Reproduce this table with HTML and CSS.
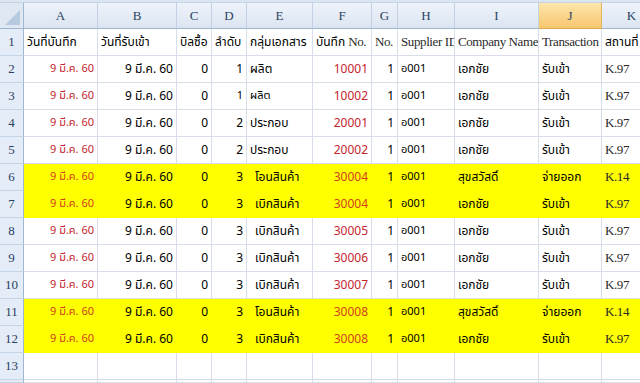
FILE: index.html
```html
<!DOCTYPE html>
<html lang="th">
<head>
<meta charset="utf-8">
<title>Sheet</title>
<link rel="stylesheet" href="styles.css">
</head>
<body>
<div class="sheet">
  <div class="strip"></div>
  <div class="row colhead">
    <div class="corner"><span class="tri"></span></div>
    <div class="ch">A</div><div class="ch">B</div><div class="ch">C</div><div class="ch">D</div><div class="ch">E</div><div class="ch">F</div><div class="ch">G</div><div class="ch">H</div><div class="ch">I</div><div class="ch sel">J</div><div class="ch">K</div>
  </div>
  <div class="row">
    <div class="rh">1</div>
    <div class="c">วันที่บันทึก</div><div class="c">วันที่รับเข้า</div><div class="c">บิลซื้อ</div><div class="c">ลำดับ</div><div class="c">กลุ่มเอกสาร</div><div class="c">บันทึก <span class="lat">No.</span></div><div class="c lat">No.</div><div class="c lat">Supplier ID</div><div class="c lat">Company Name</div><div class="c lat">Transaction</div><div class="c">สถานที่</div>
  </div>
  <div class="row">
    <div class="rh">2</div>
    <div class="c r red sm">9 มี.ค. 60</div><div class="c r">9 มี.ค. 60</div><div class="c r">0</div><div class="c r">1</div><div class="c">ผลิต</div><div class="c r red">10001</div><div class="c r">1</div><div class="c sm">อ001</div><div class="c">เอกชัย</div><div class="c">รับเข้า</div><div class="c lat">K.97</div>
  </div>
  <div class="row">
    <div class="rh">3</div>
    <div class="c r red sm">9 มี.ค. 60</div><div class="c r">9 มี.ค. 60</div><div class="c r">0</div><div class="c r sm">1</div><div class="c sm">ผลิต</div><div class="c r red">10002</div><div class="c r">1</div><div class="c sm">อ001</div><div class="c">เอกชัย</div><div class="c">รับเข้า</div><div class="c lat">K.97</div>
  </div>
  <div class="row">
    <div class="rh">4</div>
    <div class="c r red sm">9 มี.ค. 60</div><div class="c r">9 มี.ค. 60</div><div class="c r">0</div><div class="c r">2</div><div class="c">ประกอบ</div><div class="c r red">20001</div><div class="c r">1</div><div class="c sm">อ001</div><div class="c">เอกชัย</div><div class="c">รับเข้า</div><div class="c lat">K.97</div>
  </div>
  <div class="row">
    <div class="rh">5</div>
    <div class="c r red sm">9 มี.ค. 60</div><div class="c r">9 มี.ค. 60</div><div class="c r">0</div><div class="c r">2</div><div class="c">ประกอบ</div><div class="c r red">20002</div><div class="c r">1</div><div class="c sm">อ001</div><div class="c">เอกชัย</div><div class="c">รับเข้า</div><div class="c lat">K.97</div>
  </div>
  <div class="row hl">
    <div class="rh">6</div>
    <div class="c r red sm">9 มี.ค. 60</div><div class="c r">9 มี.ค. 60</div><div class="c r">0</div><div class="c r">3</div><div class="c ind">โอนสินค้า</div><div class="c r red">30004</div><div class="c r">1</div><div class="c sm">อ001</div><div class="c">สุขสวัสดิ์</div><div class="c">จ่ายออก</div><div class="c lat">K.14</div>
  </div>
  <div class="row hl">
    <div class="rh">7</div>
    <div class="c r red sm">9 มี.ค. 60</div><div class="c r">9 มี.ค. 60</div><div class="c r">0</div><div class="c r">3</div><div class="c ind">เบิกสินค้า</div><div class="c r red">30004</div><div class="c r">1</div><div class="c sm">อ001</div><div class="c">เอกชัย</div><div class="c">รับเข้า</div><div class="c lat">K.97</div>
  </div>
  <div class="row">
    <div class="rh">8</div>
    <div class="c r red sm">9 มี.ค. 60</div><div class="c r">9 มี.ค. 60</div><div class="c r">0</div><div class="c r">3</div><div class="c ind">เบิกสินค้า</div><div class="c r red">30005</div><div class="c r">1</div><div class="c sm">อ001</div><div class="c">เอกชัย</div><div class="c">รับเข้า</div><div class="c lat">K.97</div>
  </div>
  <div class="row">
    <div class="rh">9</div>
    <div class="c r red sm">9 มี.ค. 60</div><div class="c r">9 มี.ค. 60</div><div class="c r">0</div><div class="c r">3</div><div class="c ind">เบิกสินค้า</div><div class="c r red">30006</div><div class="c r">1</div><div class="c sm">อ001</div><div class="c">เอกชัย</div><div class="c">รับเข้า</div><div class="c lat">K.97</div>
  </div>
  <div class="row">
    <div class="rh">10</div>
    <div class="c r red sm">9 มี.ค. 60</div><div class="c r">9 มี.ค. 60</div><div class="c r">0</div><div class="c r">3</div><div class="c ind">เบิกสินค้า</div><div class="c r red">30007</div><div class="c r">1</div><div class="c sm">อ001</div><div class="c">เอกชัย</div><div class="c">รับเข้า</div><div class="c lat">K.97</div>
  </div>
  <div class="row hl">
    <div class="rh">11</div>
    <div class="c r red sm">9 มี.ค. 60</div><div class="c r">9 มี.ค. 60</div><div class="c r">0</div><div class="c r">3</div><div class="c ind">โอนสินค้า</div><div class="c r red">30008</div><div class="c r">1</div><div class="c sm">อ001</div><div class="c">สุขสวัสดิ์</div><div class="c">จ่ายออก</div><div class="c lat">K.14</div>
  </div>
  <div class="row hl">
    <div class="rh">12</div>
    <div class="c r red sm">9 มี.ค. 60</div><div class="c r">9 มี.ค. 60</div><div class="c r">0</div><div class="c r">3</div><div class="c ind">เบิกสินค้า</div><div class="c r red">30008</div><div class="c r">1</div><div class="c sm">อ001</div><div class="c">เอกชัย</div><div class="c">รับเข้า</div><div class="c lat">K.97</div>
  </div>
  <div class="row">
    <div class="rh">13</div>
    <div class="c"></div><div class="c"></div><div class="c"></div><div class="c"></div><div class="c"></div><div class="c"></div><div class="c"></div><div class="c"></div><div class="c"></div><div class="c"></div><div class="c"></div>
  </div>
  <div class="row short">
    <div class="rh"></div>
    <div class="c"></div><div class="c"></div><div class="c"></div><div class="c"></div><div class="c"></div><div class="c"></div><div class="c"></div><div class="c"></div><div class="c"></div><div class="c"></div><div class="c"></div>
  </div>
</div>
</body>
</html>
```

FILE: styles.css
```css
html, body {
  margin: 0;
  padding: 0;
  background: #ffffff;
  overflow: hidden;
}
body {
  width: 640px;
  height: 383px;
  font-family: Tahoma, "Noto Sans Thai", "Noto Sans Thai UI", Loma, Garuda, "Noto Sans", "DejaVu Sans", sans-serif;
  font-size: 12px;
  color: #000;
}
.sheet {
  width: 640px;
  height: 383px;
  overflow: hidden;
}
.strip {
  height: 3px;
  background: #dbe5f1;
  border-bottom: 1px solid #c5d3e3;
  box-sizing: border-box;
}
.row {
  display: grid;
  grid-template-columns: 24px 74px 79px 35px 35px 66px 59px 26px 57px 84px 63px 60px;
  height: 27px;
}
.row.short {
  height: 3px;
}
.row > div {
  box-sizing: border-box;
  min-width: 0;
  overflow: hidden;
  white-space: nowrap;
}
.colhead {
  height: 26px;
}
.corner {
  position: relative;
  background: #dfe7f2;
  border-right: 1px solid #9eb6ce;
  border-bottom: 1px solid #9eb6ce;
}
.tri {
  position: absolute;
  right: 3px;
  bottom: 3px;
  width: 0;
  height: 0;
  border-left: 15px solid transparent;
  border-bottom: 15px solid #b7c9df;
}
.ch {
  text-align: center;
  line-height: 25px;
  background: linear-gradient(#eef3fa, #dbe5f1);
  border-right: 1px solid #c2d1e3;
  border-bottom: 1px solid #9eb6ce;
  font-family: "Liberation Serif", "DejaVu Serif", serif;
  font-size: 13px;
  color: #2b4161;
}
.ch.sel {
  background: linear-gradient(#fde6ab, #f7c66f);
  border-right: 1px solid #e5b55a;
  border-bottom: 1px solid #e0a94b;
}
.rh {
  text-align: center;
  line-height: 26px;
  background: #e4ecf7;
  border-right: 1px solid #9eb6ce;
  border-bottom: 1px solid #c5d5e8;
  font-family: "Liberation Serif", "DejaVu Serif", serif;
  font-size: 13px;
  color: #2b4161;
}
.c {
  line-height: 26px;
  padding: 0 3px;
  border-right: 1px solid #d8dee9;
  border-bottom: 1px solid #d8dee9;
}
.hl .c {
  background: #ffff00;
  border-color: #ffff00;
}
.r {
  text-align: right;
}
.red {
  color: #c4262e;
}
.hl .red {
  color: #d2401c;
}
.sm {
  font-size: 11px;
}
.ind {
  padding-left: 8px;
}
.lat {
  font-family: "Liberation Serif", "DejaVu Serif", serif;
  font-size: 13px;
  letter-spacing: -0.4px;
  color: #2a2a2a;
}
```
